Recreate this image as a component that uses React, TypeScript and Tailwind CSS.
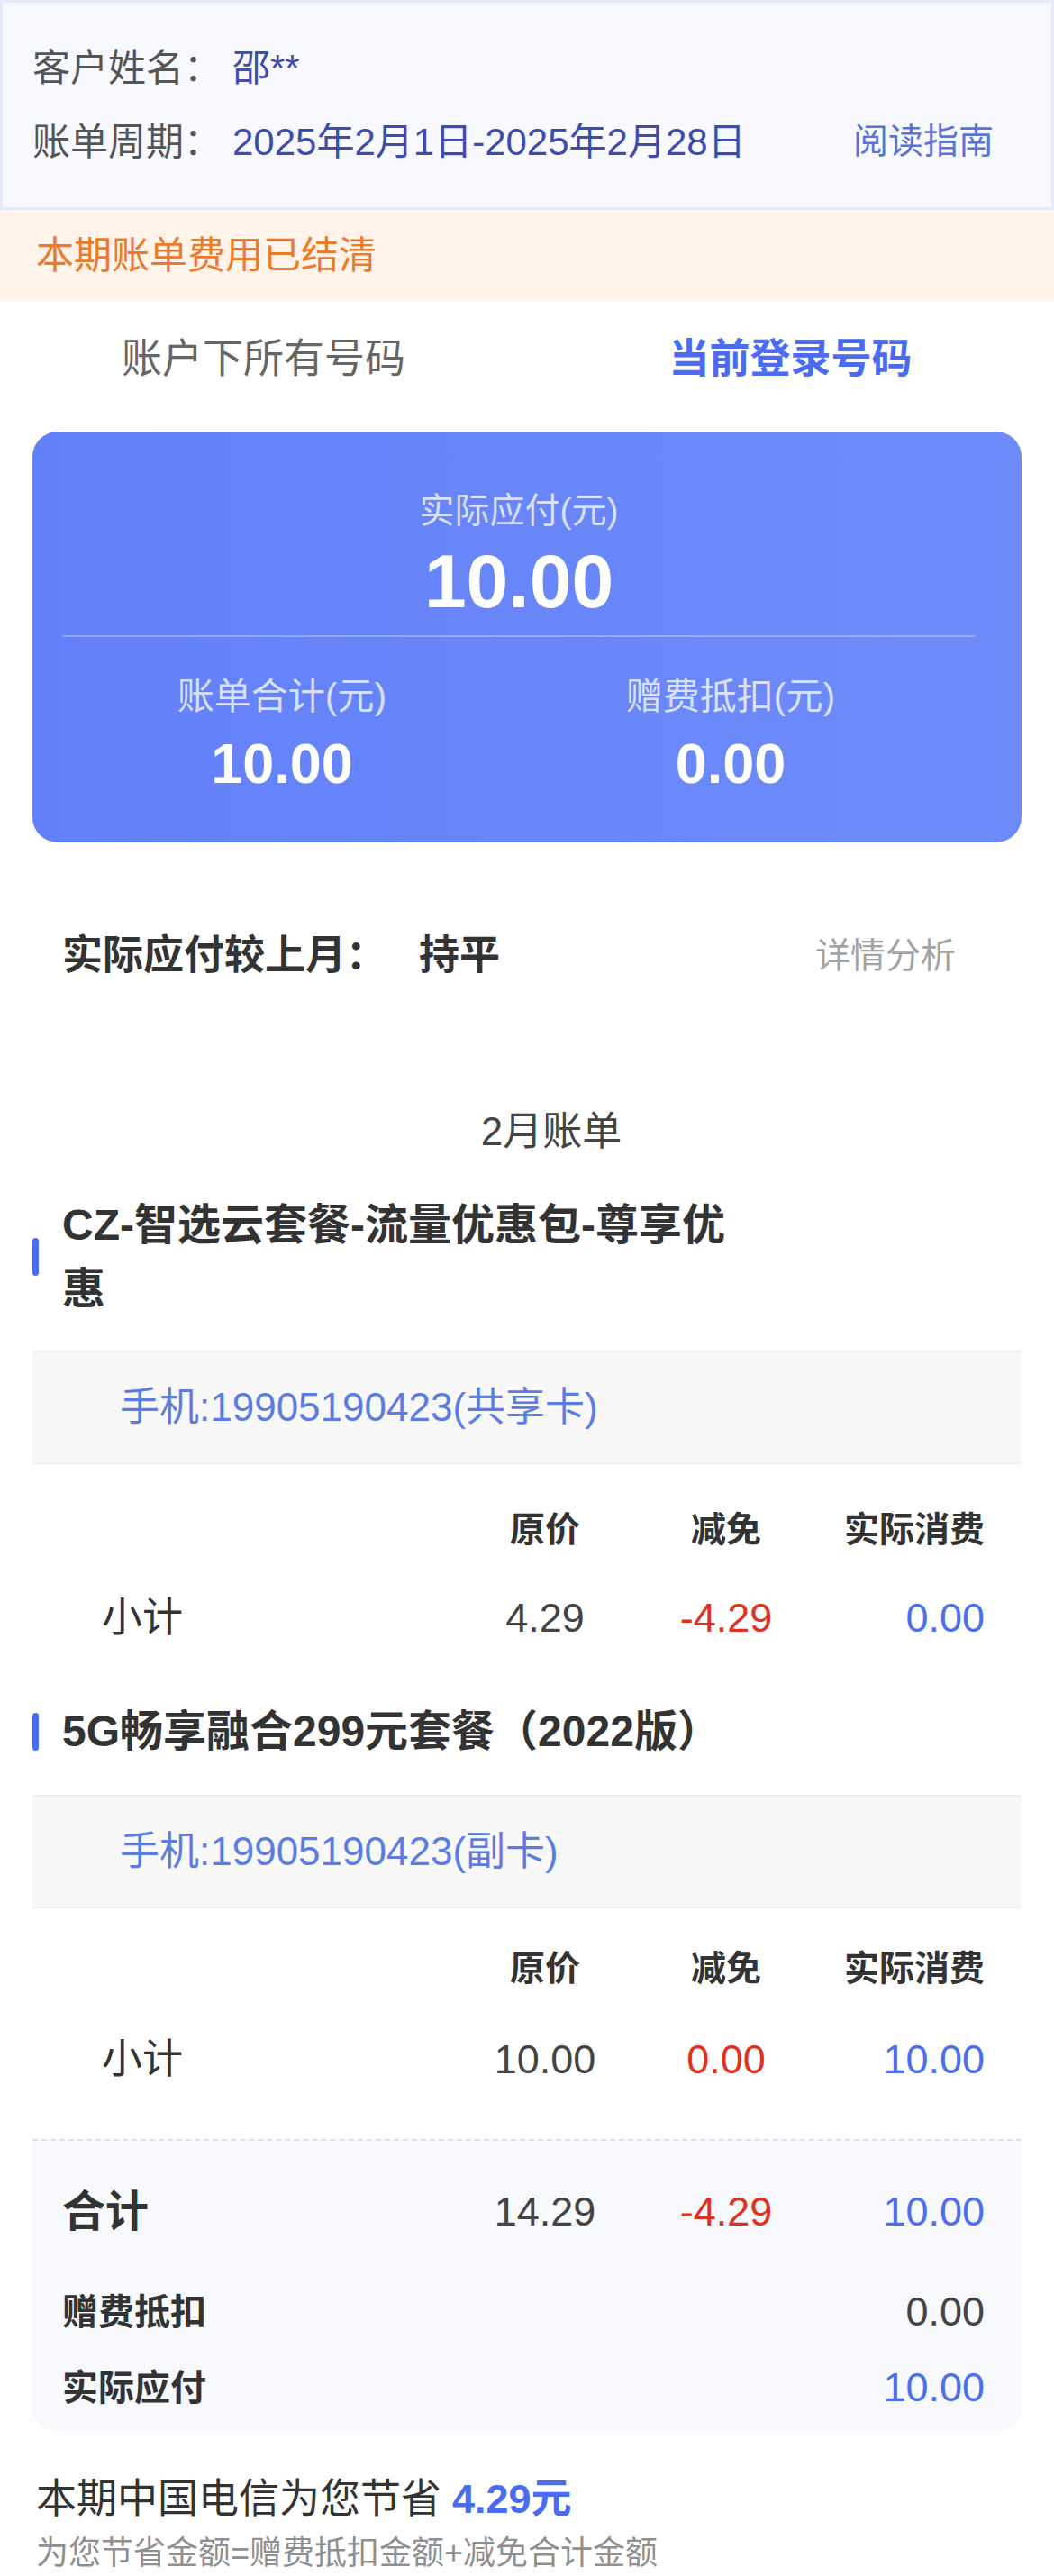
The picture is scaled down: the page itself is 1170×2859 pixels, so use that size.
import React from "react";

function SectionTitle({ children }: { children: React.ReactNode }) {
  return (
    <div className="flex items-center">
      <div className="ml-[36px] w-[7px] h-[42px] rounded-full bg-[#4a6cf0] shrink-0" />
      <div className="ml-[26px] w-[760px] text-[48px] leading-[71px] font-bold text-[#333333]">
        {children}
      </div>
    </div>
  );
}

function PhoneRow({ text }: { text: string }) {
  return (
    <div className="mx-[36px] h-[126px] flex items-center bg-[#f8f8f8] border-y-2 border-[#efefef]">
      <span className="pl-[97px] text-[44px] text-[#5b7de3]">{text}</span>
    </div>
  );
}

function TableRow({
  label,
  a,
  b,
  c,
  labelClass,
  aClass,
  bClass,
  cClass,
  h,
}: {
  label: string;
  a: string;
  b: string;
  c: string;
  labelClass: string;
  aClass: string;
  bClass: string;
  cClass: string;
  h: string;
}) {
  return (
    <div className={`flex items-center ${h}`}>
      <div className={`flex-1 ${labelClass}`}>{label}</div>
      <div className={`w-[200px] text-center ${aClass}`}>{a}</div>
      <div className={`w-[202px] text-center ${bClass}`}>{b}</div>
      <div className={`w-[186px] text-right ${cClass}`}>{c}</div>
      <div className="w-[41px]" />
    </div>
  );
}

function HeadRow() {
  return (
    <div className="mx-[36px]">
      <TableRow
        h="h-[80px]"
        label=""
        a="原价"
        b="减免"
        c="实际消费"
        labelClass=""
        aClass="text-[39px] font-bold text-[#333333]"
        bClass="text-[39px] font-bold text-[#333333]"
        cClass="text-[39px] font-bold text-[#333333]"
      />
    </div>
  );
}

function SubRow({ a, b, c }: { a: string; b: string; c: string }) {
  return (
    <div className="mx-[36px]">
      <TableRow
        h="h-[80px]"
        label="小计"
        a={a}
        b={b}
        c={c}
        labelClass="pl-[77px] text-[45px] text-[#333333]"
        aClass="text-[45px] text-[#444444]"
        bClass="text-[45px] text-[#e0311f]"
        cClass="text-[45px] text-[#4c6fee]"
      />
    </div>
  );
}

export default function App() {
  return (
    <div className="w-[1170px] bg-white font-['Liberation_Sans','Noto_Sans_CJK_SC',sans-serif] pb-[4px]">
      {/* header info */}
      <div className="h-[233px] border-[3px] border-[#e5e9fb] bg-[#f7f9ff] pt-[42px] pl-[33px] pr-[64px] flex flex-col gap-[22px]">
        <div className="h-[60px] flex items-center">
          <span className="w-[222px] text-[42px] text-[#555555]">客户姓名：</span>
          <span className="text-[42px] text-[#3e4cae]">邵**</span>
        </div>
        <div className="h-[60px] flex items-center">
          <span className="w-[222px] text-[42px] text-[#555555]">账单周期：</span>
          <span className="text-[42px] text-[#3e4cae]">2025年2月1日-2025年2月28日</span>
          <span className="ml-auto text-[39px] text-[#5b73d6]">阅读指南</span>
        </div>
      </div>

      {/* banner */}
      <div className="h-[101px] bg-[#fff3ea] flex items-center pl-[40px]">
        <span className="text-[42px] text-[#ec7a2b]">本期账单费用已结清</span>
      </div>

      {/* tabs */}
      <div className="h-[130px] flex">
        <div className="w-1/2 flex items-center justify-center text-[45px] text-[#666666]">
          账户下所有号码
        </div>
        <div className="w-1/2 flex items-center justify-center text-[45px] font-bold text-[#4a6cf4]">
          当前登录号码
        </div>
      </div>

      {/* card */}
      <div className="mt-[15px] mx-[36px] h-[456px] rounded-[28px] bg-gradient-to-r from-[#6380fb] to-[#6e8cf8] pt-[62px]">
        <div className="ml-[33px] mr-[51px]">
          <div className="h-[52px] leading-[52px] text-center text-[39px] text-white/75">实际应付(元)</div>
          <div className="mt-[2px] h-[100px] leading-[100px] text-center text-[84px] font-bold text-white">
            10.00
          </div>
          <div className="mt-[10px] h-[2px] bg-white/30" />
          <div className="mt-[40px] flex">
            <div className="w-[488px] text-center">
              <div className="h-[52px] leading-[52px] text-[41px] text-white/75">账单合计(元)</div>
              <div className="mt-[8px] h-[80px] leading-[80px] text-[63px] font-bold text-white">10.00</div>
            </div>
            <div className="w-[508px] text-center">
              <div className="h-[52px] leading-[52px] text-[41px] text-white/75">赠费抵扣(元)</div>
              <div className="mt-[8px] h-[80px] leading-[80px] text-[63px] font-bold text-white">0.00</div>
            </div>
          </div>
        </div>
      </div>

      {/* compare */}
      <div className="mt-[81px] h-[90px] flex items-center pl-[69px] pr-[109px]">
        <span className="text-[45px] font-bold text-[#333333]">实际应付较上月：</span>
        <span className="ml-[36px] text-[45px] font-bold text-[#333333]">持平</span>
        <span className="ml-auto text-[39px] text-[#a3a3a3]">详情分析</span>
      </div>

      {/* month */}
      <div className="mt-[110px] h-[80px] flex items-center justify-center pl-[54px] text-[44px] text-[#444444]">
        2月账单
      </div>

      {/* section 1 */}
      <div className="mt-[28px]">
        <SectionTitle>CZ-智选云套餐-流量优惠包-尊享优惠</SectionTitle>
      </div>
      <div className="mt-[33px]">
        <PhoneRow text="手机:19905190423(共享卡)" />
      </div>
      <div className="mt-[33px]">
        <HeadRow />
      </div>
      <div className="mt-[18px]">
        <SubRow a="4.29" b="-4.29" c="0.00" />
      </div>

      {/* section 2 */}
      <div className="mt-[50px]">
        <SectionTitle>5G畅享融合299元套餐（2022版）</SectionTitle>
      </div>
      <div className="mt-[35px]">
        <PhoneRow text="手机:19905190423(副卡)" />
      </div>
      <div className="mt-[27px]">
        <HeadRow />
      </div>
      <div className="mt-[21px]">
        <SubRow a="10.00" b="0.00" c="10.00" />
      </div>

      {/* totals */}
      <div className="mt-[48px] mx-[36px] h-[323px] bg-[#f7f9fd] border-t-2 border-dashed border-[#dde1ea] rounded-b-[24px] pt-[39px]">
        <TableRow
          h="h-[80px]"
          label="合计"
          a="14.29"
          b="-4.29"
          c="10.00"
          labelClass="pl-[33px] text-[48px] font-bold text-[#333333]"
          aClass="text-[45px] text-[#444444]"
          bClass="text-[45px] text-[#e0311f]"
          cClass="text-[45px] text-[#4c6fee]"
        />
        <div className="mt-[41px] h-[60px] flex items-center pl-[33px] pr-[41px]">
          <span className="text-[40px] font-bold text-[#333333]">赠费抵扣</span>
          <span className="ml-auto text-[45px] text-[#444444]">0.00</span>
        </div>
        <div className="mt-[24px] h-[60px] flex items-center pl-[33px] pr-[41px]">
          <span className="text-[40px] font-bold text-[#333333]">实际应付</span>
          <span className="ml-auto text-[45px] text-[#4c6fee]">10.00</span>
        </div>
      </div>

      {/* savings */}
      <div className="mt-[47px] h-[60px] flex items-center pl-[40px]">
        <span className="text-[45px] text-[#333333]">本期中国电信为您节省</span>
        <span className="ml-[12px] text-[45px] font-bold text-[#4a6cf0]">4.29元</span>
      </div>
      <div className="mt-[5px] h-[50px] flex items-center pl-[40px]">
        <span className="text-[36px] text-[#8f8f8f]">为您节省金额=赠费抵扣金额+减免合计金额</span>
      </div>
    </div>
  );
}
